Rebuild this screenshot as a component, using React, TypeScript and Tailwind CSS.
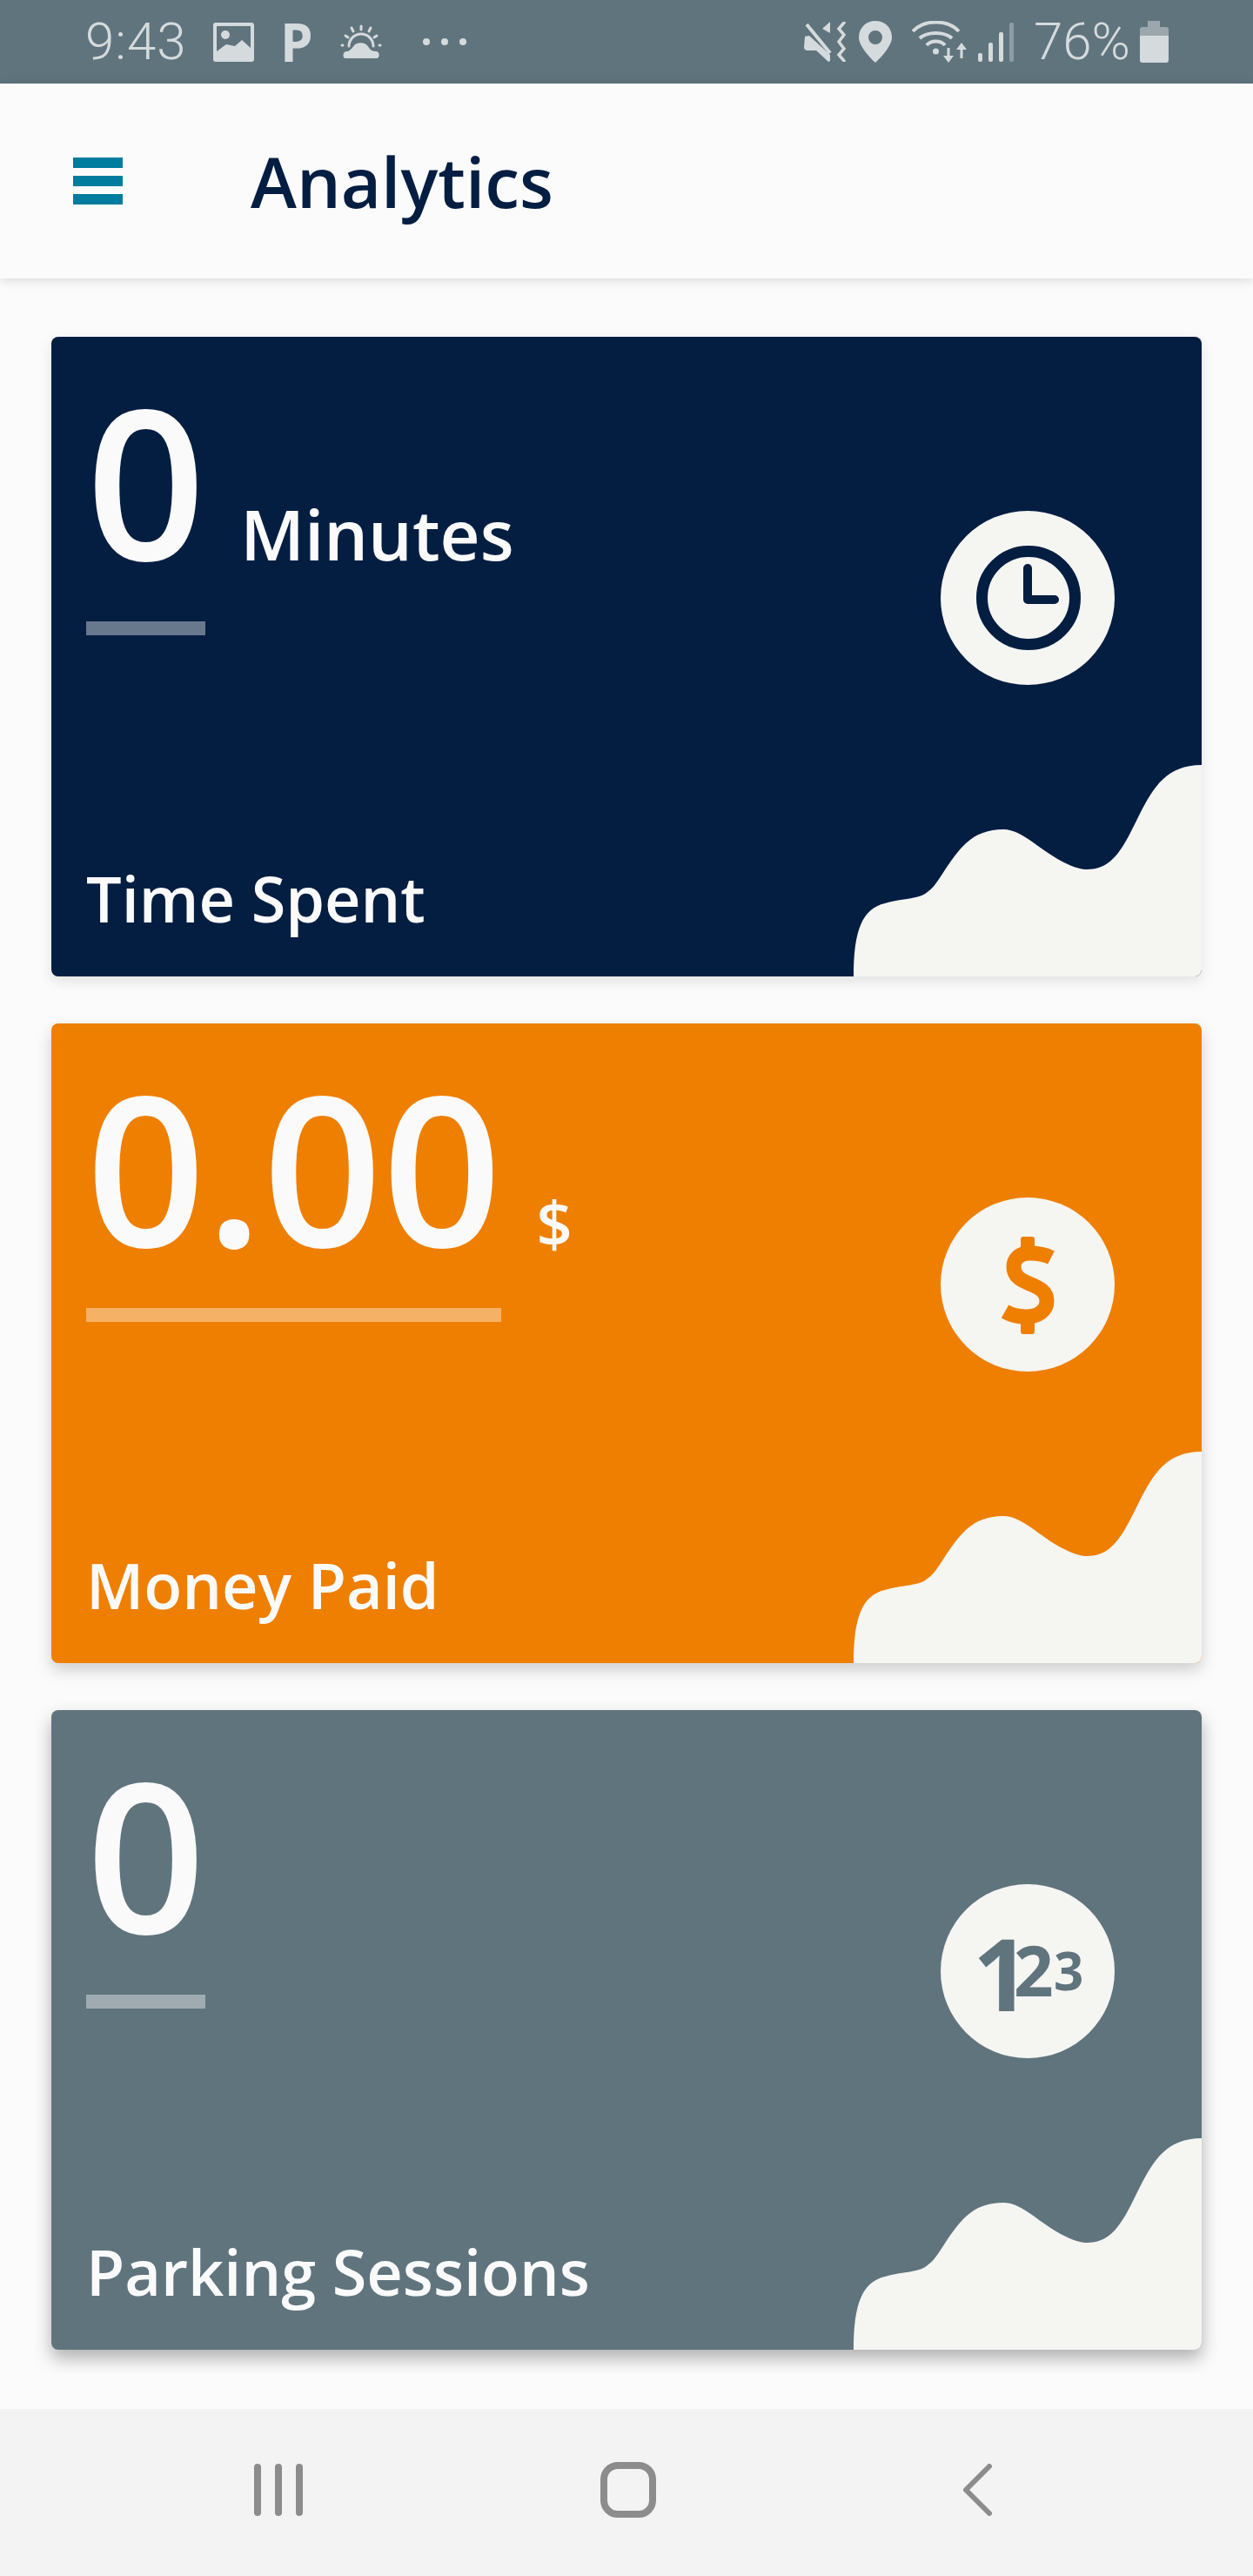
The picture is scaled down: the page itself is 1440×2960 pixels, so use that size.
import React from 'react';

const openSans = "font-['Open_Sans',sans-serif]";

function StatusBar() {
  return (
    <div className="flex h-[96px] items-center bg-[#60747e] pl-[98px] pr-[97px] text-[#d5dadc]">
      <span className="w-[112px] font-['Roboto',sans-serif] text-[60px] leading-none font-light tracking-[1px]">9:43</span>
      <svg className="ml-[35px]" width="47" height="45" viewBox="0 0 47 45">
        <rect width="47" height="45" rx="3" fill="currentColor" />
        <path d="M4 4H43V29L33 20L25 27L15 25L4 33Z" fill="#60747e" />
        <circle cx="14" cy="14" r="5" fill="currentColor" />
      </svg>
      <span className="ml-[30px] w-[38px] font-['Open_Sans',sans-serif] text-[60px] leading-none font-bold">P</span>
      <svg className="ml-[31px]" width="48" height="41" viewBox="0 0 48 41" fill="none" stroke="currentColor" strokeLinecap="round" strokeWidth="3">
        <path d="M24 2V6M13 4L15 8M35 4L33 8M6 13L9 15M42 13L39 15M2 24H3M45 24H46" />
        <path d="M10 25A14 14 0 0 1 38 25" />
        <path d="M6 40C1 40 1 30 8 30C11 30 13 26 15 24C19 19 29 19 33 25C35 29 38 30 41 30C47 30 47 40 42 40Z" fill="currentColor" stroke="#60747e" strokeWidth="2" />
      </svg>
      <div className="ml-[47px] flex gap-[13px]">
        <div className="size-2 rounded-full bg-[#d5dadc]" />
        <div className="size-2 rounded-full bg-[#d5dadc]" />
        <div className="size-2 rounded-full bg-[#d5dadc]" />
      </div>

      <div className="ml-auto flex items-center">
        <svg width="48" height="46" viewBox="0 0 48 46" fill="none" stroke="currentColor">
          <path d="M1 17L6 16L30 38V45L28 46L14 33H4Q0 33 0 29Z" fill="currentColor" stroke="none" />
          <path d="M21 8L30 0V13Z" fill="currentColor" stroke="none" />
          <path d="M3 3L30 36" strokeWidth="4" />
          <path d="M46 1L40 8L46 15L40 23L46 31L40 38L46 45" strokeWidth="3.5" strokeLinecap="round" />
        </svg>
        <svg className="ml-[15px]" width="38" height="48" viewBox="0 0 38 48">
          <path fillRule="evenodd" d="M19 0C8 0 0 8 0 19C0 31 19 48 19 48C19 48 38 31 38 19C38 8 30 0 19 0ZM19 11A8 8 0 1 1 19 27A8 8 0 1 1 19 11Z" fill="currentColor" />
        </svg>
        <svg className="ml-[23px]" width="64" height="48" viewBox="0 0 64 48" fill="none" stroke="currentColor" strokeWidth="4">
          <path d="M1 12C14 -2 41 -2 54 12" />
          <path d="M9 20C18 12 37 12 46 20" />
          <path d="M17 28C22 22 33 22 38 28" />
          <circle cx="27.5" cy="35" r="3.5" fill="currentColor" stroke="none" />
          <path d="M42 31V42M57 30V43" strokeWidth="3" />
          <path d="M36 40H48L42 48Z M51 33H63L57 25Z" fill="currentColor" stroke="none" />
        </svg>
        <svg className="ml-[12px]" width="42" height="45" viewBox="0 0 42 45" fill="currentColor">
          <rect x="0" y="35" width="5" height="10" rx="2" />
          <rect x="12" y="23" width="5" height="22" rx="2" />
          <rect x="24" y="11" width="5" height="34" rx="2" />
          <rect x="36" y="0" width="5" height="45" rx="2" opacity="0.4" />
        </svg>
        <span className="ml-[22px] w-[116px] font-['Roboto',sans-serif] text-[60px] leading-none font-light">76%</span>
        <svg className="ml-[6px]" width="33" height="48" viewBox="0 0 33 48" fill="currentColor">
          <path d="M9 0H23V7H30Q33 7 33 10V17H0V10Q0 7 3 7H9Z" opacity="0.5" />
          <path d="M0 17H33V45Q33 48 30 48H3Q0 48 0 45Z" />
        </svg>
      </div>
    </div>
  );
}

function Header() {
  return (
    <div className="relative z-10 flex h-[224px] items-center bg-[#fbfbfb] pl-[84px] shadow-[0_2px_12px_rgba(0,0,0,0.14)]">
      <div className="flex w-[57px] flex-col gap-[9px]">
        <div className="h-3 bg-[#007c9e]" />
        <div className="h-3 bg-[#007c9e]" />
        <div className="h-3 bg-[#007c9e]" />
      </div>
      <h1 className={`ml-[147px] text-[80px] leading-none font-semibold text-[#041e42] ${openSans}`}>Analytics</h1>
    </div>
  );
}

function ClockIcon() {
  return (
    <svg width="200" height="200" viewBox="0 0 200 200" fill="none" stroke="#041e42" strokeLinecap="round" strokeLinejoin="round">
      <circle cx="100" cy="100" r="100" fill="#f5f5f2" stroke="none" />
      <circle cx="101" cy="100" r="53.5" strokeWidth="13" />
      <path d="M100 66V102H131" strokeWidth="10" />
    </svg>
  );
}

function DollarIcon() {
  return (
    <svg width="200" height="200" viewBox="0 0 200 200">
      <circle cx="100" cy="100" r="100" fill="#f5f5f2" />
      <g transform="translate(71 45)" fill="none" stroke="#ef7f00" strokeWidth="17">
        <path d="M56 24C48 20 40 19 31 19C20 19 13 25 13 35C13 46 22 50 31 54C43 59 51 63 51 74C51 85 41 92 27 92C18 92 10 90 3 86" />
        <rect x="21" y="0" width="16" height="14" rx="3" fill="#ef7f00" stroke="none" />
        <rect x="21" y="96" width="16" height="16" rx="3" fill="#ef7f00" stroke="none" />
      </g>
    </svg>
  );
}

function NumbersIcon() {
  return (
    <svg width="200" height="200" viewBox="0 0 200 200" fontFamily="'Open Sans',sans-serif" fontWeight="700" fill="#60747e">
      <circle cx="100" cy="100" r="100" fill="#f5f5f2" />
      <text x="37" y="146" fontSize="115">
        1
        <tspan x="84" y="129" fontSize="80">2</tspan>
        <tspan x="130" y="122" fontSize="60">3</tspan>
      </text>
    </svg>
  );
}

function Wave() {
  return (
    <svg className="absolute right-0 bottom-0" width="400" height="243" viewBox="0 0 400 243" fill="#f5f5f2">
      <path d="M0 243C0 190 10 165 36 159C60 152 75 155 86 145C98 137 108 110 129 90C141 79 155 74 172 74C195 74 215 100 246 114C255 118 262 120 269 120C300 120 312 90 329 56C345 25 360 0 400 0V243Z" />
    </svg>
  );
}

interface StatCardProps {
  value: string;
  unit?: string;
  unitClass?: string;
  label: string;
  bg: string;
  shadow: string;
  icon: React.ReactNode;
}

function StatCard({ value, unit, unitClass, label, bg, shadow, icon }: StatCardProps) {
  return (
    <div className={`relative flex h-[735px] shrink-0 overflow-hidden rounded-lg pl-10 text-[#fafafa] ${shadow} ${bg} ${openSans}`}>
      <div className="flex flex-1 flex-col">
        <div className="flex items-baseline">
          <div className="flex flex-col">
            <span className="text-[240px] leading-[327px] font-semibold">{value}</span>
            <div className="h-4 bg-white/40" />
          </div>
          {unit && <span className={`ml-10 leading-none ${unitClass}`}>{unit}</span>}
        </div>
        <div className="mt-auto pb-[36px] text-[72px] font-semibold">{label}</div>
      </div>
      <div className="pt-[200px] pr-[100px]">{icon}</div>
      <Wave />
    </div>
  );
}

function NavBar() {
  return (
    <div className="mt-auto flex h-[192px] items-center bg-[#f3f3f3] pb-[6px] pl-[292px]">
      <div className="flex gap-4">
        <div className="h-[60px] w-2 rounded-full bg-[#8c8c8c]" />
        <div className="h-[60px] w-2 rounded-full bg-[#8c8c8c]" />
        <div className="h-[60px] w-2 rounded-full bg-[#8c8c8c]" />
      </div>
      <div className="ml-[342px] size-16 rounded-[20px] border-8 border-[#8c8c8c]" />
      <svg className="ml-[352px]" width="35" height="60" viewBox="0 0 35 60" fill="none" stroke="#8c8c8c" strokeWidth="6" strokeLinecap="round" strokeLinejoin="round">
        <path d="M31 3L4 30L31 57" />
      </svg>
    </div>
  );
}

export default function App() {
  return (
    <div className="flex h-[2960px] w-[1440px] flex-col bg-[#fbfbfb]">
      <StatusBar />
      <Header />
      <div className="flex h-[2408px] flex-col gap-[54px] overflow-hidden px-[59px] pt-[67px]">
        <StatCard value="0" unit="Minutes" unitClass="text-[80px] font-semibold" label="Time Spent" bg="bg-[#041e42]" shadow="shadow-[0_6px_16px_rgba(0,0,0,0.1)]" icon={<ClockIcon />} />
        <StatCard value="0.00" unit="$" unitClass="text-[72px] font-semibold" label="Money Paid" bg="bg-[#ef7f00]" shadow="shadow-[0_8px_18px_rgba(0,0,0,0.18)]" icon={<DollarIcon />} />
        <StatCard value="0" label="Parking Sessions" bg="bg-[#60747e]" shadow="shadow-[0_10px_20px_rgba(0,0,0,0.3)]" icon={<NumbersIcon />} />
      </div>
      <NavBar />
    </div>
  );
}
